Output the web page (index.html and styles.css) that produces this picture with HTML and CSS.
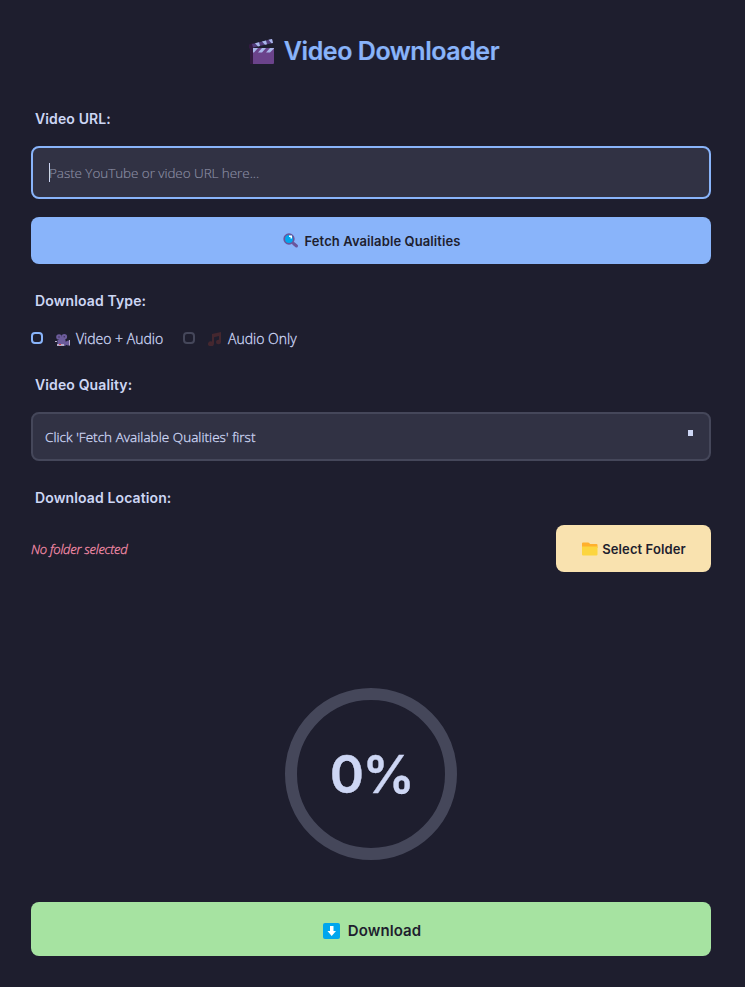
FILE: index.html
```html
<!DOCTYPE html>
<html lang="en">
<head>
<meta charset="utf-8">
<title>Video Downloader</title>
<link rel="stylesheet" href="styles.css">
</head>
<body>
<main class="app">
  <h1 class="title">
    <svg class="icon-clapper" width="26" height="28" viewBox="0 0 26 28">
      <path fill="#321b41" d="M0 6.500 4 5l2 4-2 2v15H1V11l-1-1z"/>
      <path fill="#6b438b" d="M4 10h21v15q0 1-1 1H4z"/>
      <path fill="#533d7c" d="M3 6 23 1l1 4L4 9.500z"/>
      <path fill="#a9b7ea" d="m6 5.200 4-1 1 3.700-2 .5zm7-1.700 4-1 1 3.700-2 .5zm6.500-1.700L23 1l1 4-1.500.3zM4 10h5l-4 4.500H4zm9 0h4l-4 4.500H9zm8 0h4v.5l-4 4h-4z"/>
    </svg>
    <span>Video Downloader</span>
  </h1>

  <label class="label label-url" for="url">Video URL:</label>
  <div class="field field-focus">
    <span class="caret"></span>
    <input id="url" class="input" type="text" placeholder="Paste YouTube or video URL here...">
  </div>

  <button class="btn btn-fetch" type="button">
    <svg width="16" height="16" viewBox="0 0 16 16">
      <path d="m10.500 10.500 3 2.500" stroke="#69569c" stroke-width="3" stroke-linecap="round"/>
      <circle cx="6" cy="6" r="4.800" fill="#00a6ed" stroke="#69569c" stroke-width="1.700"/>
      <path fill="#fff" d="M6 2.500h3v3H7.500V4H6z"/>
    </svg>
    <span>Fetch Available Qualities</span>
  </button>

  <div class="label label-type">Download Type:</div>
  <div class="options">
    <div class="option">
      <span class="radio radio-on"></span>
      <svg class="icon-camera" width="16" height="14" viewBox="0 0 16 14">
        <path fill="#6b5b9b" d="M2.500 7h8v6h-8zM10 9l3-1.500h1.500v5H13l-3-1z"/>
        <circle cx="4" cy="4" r="2.800" fill="#6b5b9b"/><circle cx="9.300" cy="3.700" r="2.800" fill="#6b5b9b"/>
        <path fill="#6b5b9b" d="M4 4h6v5H4z"/>
        <circle cx="4" cy="4" r=".8" fill="#403456"/><circle cx="9.300" cy="3.700" r=".8" fill="#403456"/>
        <path fill="#b7aec9" d="M0 8h2v1H0zm2 3h7v2H2zm12-4h1v5.500h-1z"/>
        <path fill="#d83b4c" d="M4 11h2v1H4z"/>
      </svg>
      <span class="option-text">Video + Audio</span>
    </div>
    <div class="option option-audio">
      <span class="radio"></span>
      <svg width="14" height="14" viewBox="0 0 14 14">
        <path fill="#44272f" d="M4 2 13 0v10a2.500 2.300 0 1 1-2-2.200V4L6 5.200v6.500A3 2.500 0 1 1 4 9.400z"/>
      </svg>
      <span class="option-text">Audio Only</span>
    </div>
  </div>

  <div class="label label-quality">Video Quality:</div>
  <div class="field select">
    <span class="select-text">Click 'Fetch Available Qualities' first</span>
    <span class="select-mark"></span>
  </div>

  <div class="label label-location">Download Location:</div>
  <div class="location">
    <span class="folder-status">No folder selected</span>
    <button class="btn btn-folder" type="button">
      <svg width="16" height="14" viewBox="0 0 16 14">
        <path fill="#ffb02e" d="M1 .5h5q1 0 1.500.8l.5.7h6.500q1 0 1 1V6H0V1.500q0-1 1-1z"/>
        <path fill="#fcd53f" d="M0 4.500h15.500v8q0 1-1 1H1q-1 0-1-1z"/>
      </svg>
      <span>Select Folder</span>
    </button>
  </div>

  <div class="progress"><span>0%</span></div>

  <button class="btn btn-download" type="button">
    <svg width="17" height="16" viewBox="0 0 17 16">
      <rect width="17" height="16" rx="2" fill="#00a6ed"/>
      <path fill="#fff" d="M7 3h3.500v5H13l-4.300 5L4.500 8H7z"/>
    </svg>
    <span>Download</span>
  </button>
</main>
</body>
</html>
```

FILE: styles.css
```css
* {
  box-sizing: border-box;
}

body {
  margin: 0;
  background: #1e1e2e;
  color: #cdd6f4;
  font-family: "Open Sans", "Noto Sans", sans-serif;
}

.app {
  display: flex;
  flex-direction: column;
  height: 987px;
  padding: 31px 34px 31px 31px;
}

svg {
  display: block;
  flex: none;
}

.title {
  display: flex;
  justify-content: center;
  align-items: center;
  gap: 9px;
  height: 40px;
  margin: 0 0 36px;
  padding-left: 6px;
  color: #89b4fa;
  font: 600 25px/40px Inter, sans-serif;
  letter-spacing: -0.45px;
  white-space: nowrap;
  -webkit-text-stroke: 0.2px;
}

.icon-clapper {
  margin-top: 2px;
}

.label {
  height: 24px;
  padding-left: 4px;
  font: 600 14px/24px Inter, sans-serif;
  letter-spacing: 0.12px;
  white-space: nowrap;
}

.label-url {
  margin-bottom: 15px;
}

.field {
  display: flex;
  align-items: center;
  border: 2px solid #45475a;
  border-radius: 8px;
  background: #313244;
}

.field-focus {
  height: 53px;
  margin-bottom: 18px;
  padding-left: 16px;
  border-color: #89b4fa;
}

.caret {
  width: 1px;
  height: 19px;
  margin-right: -1px;
  background: #cdd6f4;
}

.input {
  flex: 1;
  height: 24px;
  padding: 0;
  border: 0;
  outline: 0;
  background: none;
  color: #cdd6f4;
  font: 300 13.500px/24px "Open Sans", sans-serif;
  letter-spacing: -0.07px;
  -webkit-text-stroke: 0.15px;
}

.input::placeholder {
  color: #8b8ea3;
  opacity: 1;
}

.btn {
  display: flex;
  justify-content: center;
  align-items: center;
  padding: 0;
  border: 0;
  border-radius: 8px;
  color: #1e1e2e;
  font: 600 13px/20px Inter, sans-serif;
  letter-spacing: 0.1px;
  white-space: nowrap;
}

.btn-fetch {
  gap: 5px;
  height: 47px;
  margin-bottom: 25px;
  padding-left: 2px;
  background: #89b4fa;
}

.label-type {
  margin-bottom: 14px;
}

.options {
  display: flex;
  height: 24px;
  margin-bottom: 22px;
}

.option {
  display: flex;
  align-items: center;
  width: 152px;
}

.icon-camera {
  margin-top: 2px;
}

.radio {
  width: 12px;
  height: 12px;
  margin: 0 12px 2px 0;
  border: 2px solid #45475a;
  border-radius: 4px;
}

.radio-on {
  border-color: #89b4fa;
}

.option-text {
  margin-left: 5px;
  font-size: 14px;
  font-weight: 300;
  line-height: 24px;
  white-space: nowrap;
  -webkit-text-stroke: 0.3px;
}

.option-audio .radio {
  margin-right: 13px;
}

.option-audio .option-text {
  margin-left: 6px;
}

.label-quality {
  margin-bottom: 15px;
}

.select {
  justify-content: space-between;
  height: 49px;
  margin-bottom: 25px;
  padding: 0 16px 0 12px;
}

.select-text {
  font-size: 13.500px;
  font-weight: 300;
  letter-spacing: 0.04px;
  -webkit-text-stroke: 0.3px;
}

.select-mark {
  width: 5px;
  height: 6px;
  margin-bottom: 8px;
  background: #cdd6f4;
}

.label-location {
  margin-bottom: 15px;
}

.location {
  display: flex;
  justify-content: space-between;
  align-items: center;
  height: 47px;
}

.folder-status {
  color: #f38ba8;
  font-size: 13px;
  font-style: italic;
  font-weight: 300;
  letter-spacing: -0.25px;
  -webkit-text-stroke: 0.3px;
}

.btn-folder {
  gap: 4px;
  width: 155px;
  height: 47px;
  padding-left: 1px;
  background: #f9e2af;
}

.progress {
  display: flex;
  justify-content: center;
  align-items: center;
  align-self: center;
  width: 172px;
  height: 172px;
  margin-top: 116px;
  padding: 2px 0 0 1px;
  border: 12px solid #45475a;
  border-radius: 50%;
  font: 600 52px/60px Inter, sans-serif;
  letter-spacing: -1.500px;
  -webkit-text-stroke: 0.4px;
}

.btn-download {
  gap: 8px;
  height: 54px;
  margin-top: 42px;
  padding: 3px 0 0 2px;
  background: #a6e3a1;
  font-size: 15px;
}
```
